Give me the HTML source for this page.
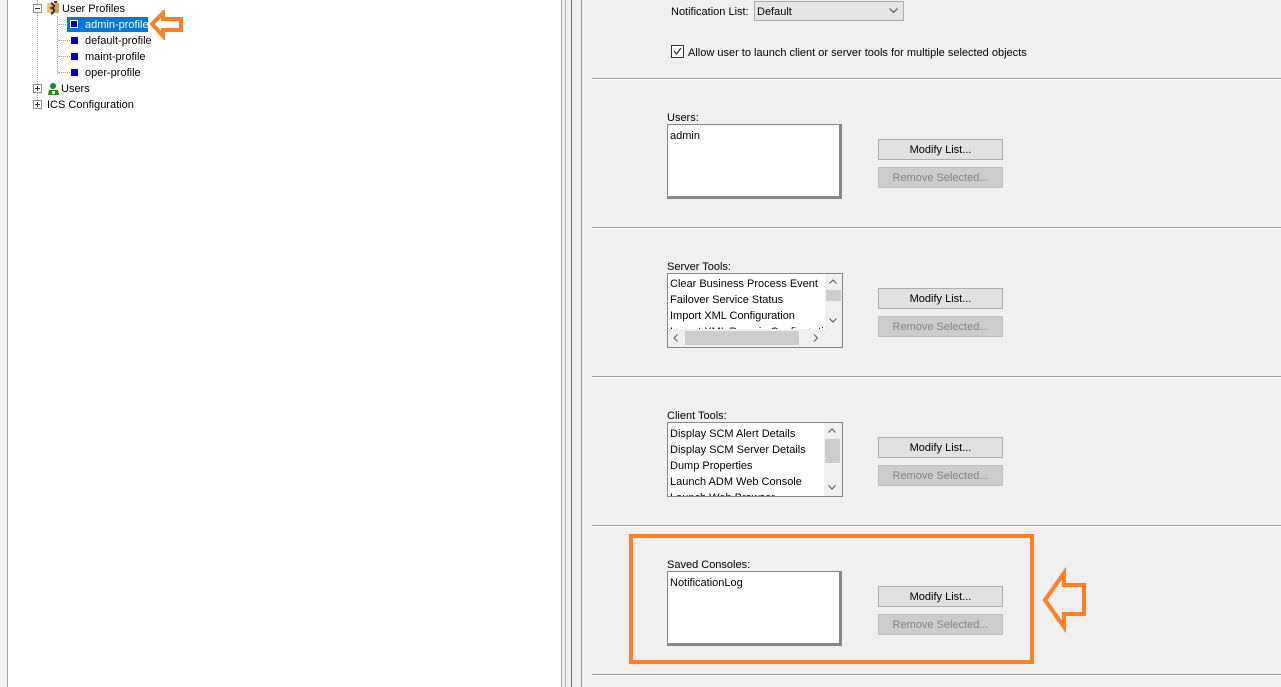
<!DOCTYPE html>
<html><head><meta charset="utf-8"><style>
*{margin:0;padding:0;box-sizing:border-box}
body{width:1281px;height:687px;overflow:hidden;background:#f0f0f0;font-family:"Liberation Sans",Tahoma,sans-serif;font-size:11px;color:#000;position:relative}
.a{position:absolute}
.t{position:absolute;white-space:nowrap;line-height:16px;margin-top:1px}
.list{position:absolute;background:#fff;border:1px solid #828790;border-right:3px solid #888;border-bottom:3px solid #888;overflow:hidden}
.list div{line-height:16px;padding-left:2px;white-space:nowrap}
.btn{position:absolute;width:125px;height:21px;border:1px solid #adadad;background:#e1e1e1;text-align:center;line-height:20px}
.btn.d{color:#838383;background:#cccccc;border-color:#bfbfbf}
.sep{position:absolute;left:592px;right:0;height:2px;border-top:1px solid #a0a0a0;border-bottom:1px solid #fff}
.sb{position:absolute;background:#f0f0f0}
</style></head><body>
<div class="a" style="left:0;top:0;width:7px;height:687px;background:#f0f0f0"></div>
<div class="a" style="left:7px;top:0;width:1px;height:687px;background:#a0a0a0"></div>
<div class="a" style="left:8px;top:0;width:553px;height:687px;background:#fff"></div>
<div class="a" style="left:37px;top:0;width:1px;height:104px;border-left:1px dotted #a0a0a0"></div>
<div class="a" style="left:33px;top:4px;width:9px;height:9px;border:1px solid #919191;background:#fff"></div>
<div class="a" style="left:35px;top:8px;width:5px;height:1px;background:#333"></div>
<svg class="a" style="left:47px;top:1px" width="14" height="14"><rect x="0" y="2" width="4" height="10" fill="#f5c080"/><path d="M4 2 C8 4 8 6 5 7 C8 8 8 11 4 13" stroke="#333" stroke-width="2" fill="#e8a040"/><rect x="8" y="2" width="4" height="10" fill="#c8a060"/><rect x="7" y="0" width="3" height="2" fill="#d00"/></svg>
<div class="t" style="left:62px;top:0px">User Profiles</div>
<div class="a" style="left:57px;top:16px;width:1px;height:58px;border-left:1px dotted #a0a0a0"></div>
<div class="a" style="left:58px;top:24px;width:8px;border-top:1px dotted #a0a0a0"></div>
<div class="a" style="left:58px;top:40px;width:12px;border-top:1px dotted #a0a0a0"></div>
<div class="a" style="left:58px;top:56px;width:12px;border-top:1px dotted #a0a0a0"></div>
<div class="a" style="left:58px;top:72px;width:12px;border-top:1px dotted #a0a0a0"></div>
<div class="a" style="left:67px;top:17px;width:81px;height:15px;background:#0078d7"></div>
<div class="a" style="left:70px;top:20px;width:8px;height:8px;border:1px solid #fff;background:#0000c0"></div>
<div class="t" style="left:85px;top:16px;color:#fff">admin-profile</div>
<div class="a" style="left:71px;top:37px;width:7px;height:7px;background:#0000c8"></div>
<div class="t" style="left:85px;top:32px">default-profile</div>
<div class="a" style="left:71px;top:53px;width:7px;height:7px;background:#0000c8"></div>
<div class="t" style="left:85px;top:48px">maint-profile</div>
<div class="a" style="left:71px;top:69px;width:7px;height:7px;background:#0000c8"></div>
<div class="t" style="left:85px;top:64px">oper-profile</div>
<div class="a" style="left:33px;top:84px;width:9px;height:9px;border:1px solid #919191;background:#fff"></div>
<div class="a" style="left:35px;top:88px;width:5px;height:1px;background:#333"></div>
<div class="a" style="left:37px;top:86px;width:1px;height:5px;background:#333"></div>
<svg class="a" style="left:47px;top:82px" width="13" height="13"><circle cx="6" cy="4" r="3" fill="#1a8a1a"/><path d="M1 13 L2 8 L11 8 L12 13Z" fill="#1a8a1a"/><rect x="5" y="9" width="3" height="3" fill="#fff"/></svg>
<div class="t" style="left:61px;top:80px">Users</div>
<div class="a" style="left:33px;top:100px;width:9px;height:9px;border:1px solid #919191;background:#fff"></div>
<div class="a" style="left:35px;top:104px;width:5px;height:1px;background:#333"></div>
<div class="a" style="left:37px;top:102px;width:1px;height:5px;background:#333"></div>
<div class="t" style="left:47px;top:96px">ICS Configuration</div>
<svg class="a" style="left:148px;top:10px" width="38" height="30"><path d="M4 14 L15 3 L15 9 L33 9 L33 20 L15 20 L15 26 Z" fill="#fff" stroke="#ff7f27" stroke-width="4" stroke-linejoin="miter"/></svg>
<div class="a" style="left:561px;top:0;width:1px;height:687px;background:#a0a0a0"></div>
<div class="a" style="left:562px;top:0;width:20px;height:687px;background:#f0f0f0"></div>
<div class="a" style="left:565px;top:0;width:1px;height:687px;background:#b0b0b0"></div>
<div class="a" style="left:571px;top:0;width:1px;height:687px;background:#696969"></div>
<div class="a" style="left:581px;top:0;width:1px;height:687px;background:#a0a0a0"></div>
<div class="t" style="left:671px;top:3px">Notification List:</div>
<div class="a" style="left:754px;top:1px;width:150px;height:20px;border:1px solid #acacac;background:#e5e5e5"></div>
<div class="t" style="left:757px;top:3px">Default</div>
<svg class="a" style="left:889px;top:8px" width="9" height="6"><path d="M0.5 0.5 L4.5 4.5 L8.5 0.5" stroke="#444" fill="none"/></svg>
<div class="a" style="left:671px;top:45px;width:13px;height:13px;border:1px solid #333;background:#fff"></div>
<svg class="a" style="left:672px;top:46px" width="11" height="11"><path d="M2 5 L4.5 8 L9 2" stroke="#333" stroke-width="1.3" fill="none"/></svg>
<div class="t" style="left:688px;top:44px">Allow user to launch client or server tools for multiple selected objects</div>
<div class="sep" style="top:78px"></div>
<div class="sep" style="top:227px"></div>
<div class="sep" style="top:376px"></div>
<div class="sep" style="top:525px"></div>
<div class="sep" style="top:674px"></div>

<div class="t" style="left:667px;top:109px">Users:</div>
<div class="list" style="left:667px;top:124px;width:175px;height:75px;padding-top:3px"><div>admin</div></div>
<div class="btn" style="left:878px;top:139px">Modify List...</div>
<div class="btn d" style="left:878px;top:167px">Remove Selected...</div>

<div class="t" style="left:667px;top:258px">Server Tools:</div>
<div class="a" style="left:667px;top:273px;width:176px;height:75px;background:#fff;border:1px solid #828790"></div>
<div class="a" style="left:668px;top:274px;width:157px;height:55px;overflow:hidden">
<div class="t" style="left:2px;top:1px">Clear Business Process Event</div>
<div class="t" style="left:2px;top:17px">Failover Service Status</div>
<div class="t" style="left:2px;top:33px">Import XML Configuration</div>
<div class="t" style="left:2px;top:49px">Import XML Domain Configuration</div></div>
<div class="sb" style="left:825px;top:274px;width:17px;height:55px"></div>
<div class="a" style="left:826px;top:290px;width:15px;height:11px;background:#cdcdcd"></div>
<svg class="a" style="left:829px;top:279px" width="8" height="5"><path d="M0.5 4.5 L4 1 L7.5 4.5" stroke="#555" fill="none"/></svg>
<svg class="a" style="left:829px;top:318px" width="8" height="5"><path d="M0.5 0.5 L4 4 L7.5 0.5" stroke="#555" fill="none"/></svg>
<div class="sb" style="left:668px;top:329px;width:174px;height:18px"></div>
<div class="a" style="left:685px;top:331px;width:114px;height:14px;background:#cdcdcd"></div>
<svg class="a" style="left:673px;top:334px" width="6" height="8"><path d="M4.5 0.5 L1 4 L4.5 7.5" stroke="#555" fill="none"/></svg>
<svg class="a" style="left:813px;top:334px" width="6" height="8"><path d="M1 0.5 L4.5 4 L1 7.5" stroke="#555" fill="none"/></svg>
<div class="btn" style="left:878px;top:288px">Modify List...</div>
<div class="btn d" style="left:878px;top:316px">Remove Selected...</div>

<div class="t" style="left:667px;top:407px">Client Tools:</div>
<div class="a" style="left:667px;top:422px;width:176px;height:75px;background:#fff;border:1px solid #828790"></div>
<div class="a" style="left:668px;top:423px;width:155px;height:73px;overflow:hidden">
<div class="t" style="left:2px;top:2px">Display SCM Alert Details</div>
<div class="t" style="left:2px;top:18px">Display SCM Server Details</div>
<div class="t" style="left:2px;top:34px">Dump Properties</div>
<div class="t" style="left:2px;top:50px">Launch ADM Web Console</div>
<div class="t" style="left:2px;top:66px">Launch Web Browser</div></div>
<div class="sb" style="left:824px;top:423px;width:18px;height:73px"></div>
<div class="a" style="left:825px;top:439px;width:15px;height:24px;background:#cdcdcd"></div>
<svg class="a" style="left:828px;top:428px" width="8" height="5"><path d="M0.5 4.5 L4 1 L7.5 4.5" stroke="#555" fill="none"/></svg>
<svg class="a" style="left:828px;top:485px" width="8" height="5"><path d="M0.5 0.5 L4 4 L7.5 0.5" stroke="#555" fill="none"/></svg>
<div class="btn" style="left:878px;top:437px">Modify List...</div>
<div class="btn d" style="left:878px;top:465px">Remove Selected...</div>

<div class="t" style="left:667px;top:556px">Saved Consoles:</div>
<div class="list" style="left:667px;top:571px;width:175px;height:75px;padding-top:3px"><div>NotificationLog</div></div>
<div class="btn" style="left:878px;top:586px">Modify List...</div>
<div class="btn d" style="left:878px;top:614px">Remove Selected...</div>

<div class="a" style="left:629px;top:534px;width:405px;height:130px;border:4px solid #ff7f27"></div>
<svg class="a" style="left:1040px;top:567px" width="50" height="66"><path d="M5 33 L24 6 L24 18 L44 18 L44 47 L24 47 L24 60 Z" fill="none" stroke="#ff7f27" stroke-width="4"/></svg>
</body></html>
